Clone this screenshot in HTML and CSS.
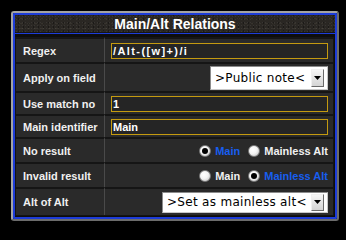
FILE: index.html
```html
<!DOCTYPE html>
<html>
<head>
<meta charset="utf-8">
<link rel="stylesheet" href="styles.css">
</head>
<body>
<div class="frame">
  <div class="inner">
    <div class="title">Main/Alt Relations</div>
    <div class="table">
      <div class="cell label">Regex</div>
      <div class="cell value"><div class="field field-regex">/Alt-([w]+)/i</div></div>

      <div class="cell label">Apply on field</div>
      <div class="cell value end">
        <div class="select select-field"><span class="select-text">&gt;Public note&lt;</span><span class="select-btn"><svg width="7" height="4" viewBox="0 0 7 4"><path d="M0 0H7L3.5 4Z" fill="#000"/></svg></span></div>
      </div>

      <div class="cell label">Use match no</div>
      <div class="cell value"><div class="field">1</div></div>

      <div class="cell label">Main identifier</div>
      <div class="cell value"><div class="field">Main</div></div>

      <div class="cell label">No result</div>
      <div class="cell value end radios">
        <span class="radio-item"><span class="radio checked"></span><span class="radio-label active">Main</span></span>
        <span class="radio-item"><span class="radio"></span><span class="radio-label">Mainless Alt</span></span>
      </div>

      <div class="cell label">Invalid result</div>
      <div class="cell value end radios">
        <span class="radio-item"><span class="radio"></span><span class="radio-label">Main</span></span>
        <span class="radio-item"><span class="radio checked"></span><span class="radio-label active">Mainless Alt</span></span>
      </div>

      <div class="cell label">Alt of Alt</div>
      <div class="cell value end">
        <div class="select select-alt"><span class="select-text">&gt;Set as mainless alt&lt;</span><span class="select-btn"><svg width="7" height="4" viewBox="0 0 7 4"><path d="M0 0H7L3.5 4Z" fill="#000"/></svg></span></div>
      </div>
    </div>
  </div>
</div>
</body>
</html>
```

FILE: styles.css
```css
html, body {
  margin: 0;
  padding: 0;
  background: #000;
}
body {
  width: 346px;
  height: 228px;
  overflow: hidden;
  font-family: "Liberation Sans", Arial, sans-serif;
}
.frame {
  margin: 11px 0 0 11px;
  width: 328px;
  height: 210px;
  box-sizing: border-box;
  border: 2px solid #8a8a8a;
  border-color: #a3a3a3 #6c6c6c #6c6c6c #a3a3a3;
  border-radius: 3px;
  background: #0d0d0d;
}
.inner {
  height: 100%;
  box-sizing: border-box;
  border: 2px solid #1d3cd8;
  border-radius: 1px;
  display: flex;
  flex-direction: column;
}
.title {
  flex: none;
  height: 18px;
  border-bottom: 1px solid #1d3cd8;
  box-shadow: inset 0 -1px 0 #151515;
  background-color: #2a2723;
  background-image:
    radial-gradient(rgba(255,255,255,0.07) 1px, transparent 1px),
    radial-gradient(rgba(0,0,0,0.35) 1px, transparent 1px),
    radial-gradient(rgba(120,110,95,0.18) 1px, transparent 1.5px);
  background-size: 3px 3px, 5px 4px, 7px 5px;
  background-position: 0 0, 1px 2px, 3px 1px;
  color: #fff;
  font-weight: bold;
  font-size: 14px;
  display: flex;
  align-items: center;
  justify-content: center;
}
.table {
  margin: 3px 1px 1px 0;
  display: grid;
  grid-template-columns: 89px 1fr;
  grid-template-rows: 25px 29px 23px 23px 25px 25px 28px;
  border: 1px solid #141414;
  border-top: 0;
  background: #2a2a2a;
}
.cell {
  box-sizing: border-box;
  border-top: 2px solid #151515;
  display: flex;
  align-items: center;
  min-width: 0;
}
.label {
  padding-left: 7px;
  border-right: 1px solid #4a4a4a;
  color: #f0f0f0;
  font-weight: bold;
  font-size: 11px;
  white-space: nowrap;
}
.value {
  padding: 0 5px 0 6px;
}
.end {
  justify-content: flex-end;
}
.field {
  flex: 1;
  height: 16px;
  box-sizing: border-box;
  padding: 0 1px;
  border: 1px solid #c49a10;
  background: #252525;
  color: #fff;
  font-weight: bold;
  font-size: 11px;
  line-height: 14px;
  white-space: nowrap;
  overflow: hidden;
}
.field-regex {
  letter-spacing: 1.4px;
}
.select {
  box-sizing: border-box;
  display: flex;
  align-items: center;
  background: #fff;
  border: 1px solid #a8a8a8;
  border-color: #8c8c8c #c8c8c8 #c8c8c8 #8c8c8c;
  padding-left: 4px;
  padding-right: 3px;
  font-family: "DejaVu Sans", Verdana, sans-serif;
  font-size: 12px;
  letter-spacing: 0.3px;
  color: #000;
  white-space: nowrap;
}
.select-field {
  width: 118px;
  height: 24px;
}
.select-alt {
  width: 166px;
  height: 21px;
}
.select-text {
  flex: 1;
  overflow: hidden;
}
.select-btn {
  flex: none;
  width: 13px;
  height: 18px;
  box-sizing: border-box;
  display: flex;
  align-items: center;
  justify-content: center;
  background: linear-gradient(#f6f6f6, #d4d4d4);
  border: 1px solid;
  border-color: #f0f0f0 #6a6a6a #6a6a6a #f0f0f0;
}
.select-alt .select-btn {
  height: 17px;
}
.radios {
  gap: 8px;
}
.radio-item {
  display: flex;
  align-items: center;
  gap: 4px;
}
.radio {
  position: relative;
  width: 12px;
  height: 12px;
  border-radius: 50%;
  box-sizing: border-box;
  border: 1px solid #7a7a7a;
  background: radial-gradient(circle at 38% 35%, #ffffff 0%, #f4f4f4 45%, #bdbdbd 100%);
}
.radio.checked::after {
  content: "";
  position: absolute;
  left: 2px;
  top: 2px;
  width: 6px;
  height: 6px;
  border-radius: 50%;
  background: #000;
}
.radio-label {
  color: #f0f0f0;
  font-weight: bold;
  font-size: 11px;
  white-space: nowrap;
}
.radio-label.active {
  color: #175ef0;
}
```
